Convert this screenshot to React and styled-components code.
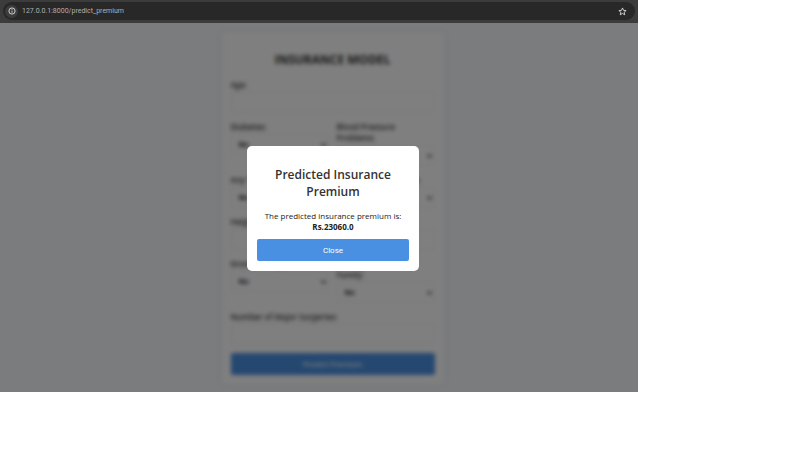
import React, { useState } from 'react'
import styled, { createGlobalStyle } from 'styled-components'

const fonts = {
  body: `'Open Sans', 'Noto Sans', sans-serif`,
  control: `Roboto, 'Liberation Sans', sans-serif`,
}

const colors = {
  page: '#f6f8fb',
  text: '#333',
  blue: '#4a90e2',
  chrome: '#3c3c3c',
  address: '#282828',
}

const GlobalStyle = createGlobalStyle`
  * {
    box-sizing: border-box;
  }
  body {
    margin: 0;
    background: #fff;
    font-family: ${fonts.body};
    color: ${colors.text};
  }
`

const Browser = styled.div`
  width: calc(100% - 168px);
  overflow: hidden;
`

const Toolbar = styled.header`
  padding: 2px 3px 3px;
  background: ${colors.chrome};
`

const AddressBar = styled.div`
  display: flex;
  align-items: center;
  gap: 4px;
  height: 18px;
  padding: 0 8px 0 2px;
  border-radius: 9px;
  background: ${colors.address};
`

const IconButton = styled.button`
  display: flex;
  align-items: center;
  justify-content: center;
  width: ${({ $size }) => $size}px;
  height: ${({ $size }) => $size}px;
  padding: 0;
  border: 0;
  border-radius: 50%;
  background: ${({ $filled }) => ($filled ? '#3c3c3c' : 'transparent')};
  color: #d0d0d0;
`

const Url = styled.input`
  flex: 1;
  min-width: 0;
  padding: 0;
  border: 0;
  outline: 0;
  background: transparent;
  font: 7px/12px ${fonts.control};
  color: #b0b0b0;
`

const Page = styled.main`
  position: relative;
  display: flex;
  justify-content: center;
  padding: 9px 0 8px 27px;
  background: ${colors.page};
`

const Form = styled.form`
  display: flex;
  flex-direction: column;
  gap: 8px;
  width: 222px;
  padding: 19px 9px 9px;
  border-radius: 4px;
  background: #fff;
  box-shadow: 0 0 5px rgba(0, 0, 0, 0.08);
`

const FormTitle = styled.h1`
  margin: 0 0 2px;
  font-size: 12px;
  line-height: 18px;
  font-weight: 700;
  text-align: center;
`

const Row = styled.div`
  display: grid;
  grid-template-columns: 1fr 1fr;
  align-items: start;
  gap: 8px;
`

const Field = styled.div`
  display: flex;
  flex-direction: column;
  gap: 2px;
`

const Label = styled.label`
  font-size: 8px;
  line-height: 11px;
  font-weight: 600;
  color: #444;
`

const Input = styled.input`
  width: 100%;
  height: 21px;
  padding: 0 7px;
  border: 1px solid #eee;
  border-radius: 2px;
  background: #fff;
  font: 8px ${fonts.control};
`

const SelectBox = styled.div`
  display: grid;
  align-items: center;

  select,
  svg {
    grid-area: 1 / 1;
  }
  svg {
    justify-self: end;
    margin-right: 3px;
    pointer-events: none;
  }
`

const Select = styled.select`
  width: 100%;
  height: 21px;
  padding: 0 7px;
  border: 1px solid #eee;
  border-radius: 2px;
  appearance: none;
  background: #fff;
  font: 500 8px ${fonts.control};
  color: #000;
`

const Button = styled.button`
  width: 100%;
  height: 22px;
  padding: 0;
  border: 0;
  border-radius: 2px;
  background: ${colors.blue};
  font: 8px ${fonts.control};
  color: #fff;
  cursor: pointer;
`

const Overlay = styled.div`
  position: absolute;
  inset: 0;
  display: flex;
  align-items: center;
  justify-content: center;
  padding: 2px 0 0 28px;
  background: rgba(0, 0, 0, 0.5);
  backdrop-filter: blur(2px);
`

const Modal = styled.div`
  width: 172px;
  padding: 20px 10px 10px;
  border-radius: 5px;
  background: #fff;
  text-align: center;

  h2 {
    margin: 0 0 10px;
    font-size: 12px;
    line-height: 17px;
    font-weight: 600;
  }
  p {
    margin: 0 0 4px;
    font-size: 8px;
    line-height: 11px;
    color: #222;
  }
  strong {
    display: block;
    font-weight: 700;
  }
`

const SelectField = ({ id, label }) => (
  <Field>
    <Label htmlFor={id}>{label}</Label>
    <SelectBox>
      <Select id={id} defaultValue="No">
        <option>No</option>
        <option>Yes</option>
      </Select>
      <svg width="5" height="4" viewBox="0 0 5 4" fill="none" stroke="#000" strokeWidth="1.2">
        <path d="M.5.8 2.5 2.9 4.5.8" />
      </svg>
    </SelectBox>
  </Field>
)

const TextField = ({ id, label }) => (
  <Field>
    <Label htmlFor={id}>{label}</Label>
    <Input id={id} type="number" />
  </Field>
)

const App = () => {
  const [open, setOpen] = useState(true)

  const handleSubmit = (e) => {
    e.preventDefault()
    setOpen(true)
  }

  return (
    <Browser>
      <GlobalStyle />
      <Toolbar>
        <AddressBar>
          <IconButton type="button" aria-label="Site information" $size={13} $filled>
            <svg width="8" height="8" viewBox="0 0 8 8" fill="none" stroke="currentColor">
              <circle cx="4" cy="4" r="3.1" strokeWidth="1" />
              <path d="M4 3.6V5.7M4 2.2V3" strokeWidth="0.9" />
            </svg>
          </IconButton>
          <Url aria-label="Address" defaultValue="127.0.0.1:8000/predict_premium" />
          <IconButton type="button" aria-label="Bookmark" $size={10}>
            <svg width="9" height="9" viewBox="0 0 24 24" fill="none" stroke="currentColor" strokeWidth="2.6">
              <path d="m12 2.5 2.7 6.4 6.9.6-5.2 4.5 1.6 6.8-6-3.6-6 3.6L7.6 14 2.4 9.5l6.9-.6z" />
            </svg>
          </IconButton>
        </AddressBar>
      </Toolbar>
      <Page>
        <Form onSubmit={handleSubmit}>
          <FormTitle>INSURANCE MODEL</FormTitle>
          <TextField id="age" label="Age:" />
          <Row>
            <SelectField id="diabetes" label="Diabetes:" />
            <SelectField id="pressure" label="Blood Pressure Problems:" />
          </Row>
          <Row>
            <SelectField id="transplants" label="Any Transplants:" />
            <SelectField id="chronic" label="Any Chronic Diseases:" />
          </Row>
          <Row>
            <TextField id="height" label="Height:" />
            <TextField id="weight" label="Weight:" />
          </Row>
          <Row>
            <SelectField id="allergies" label="Known Allergies:" />
            <SelectField id="cancer" label="History of Cancer in Family:" />
          </Row>
          <TextField id="surgeries" label="Number of Major Surgeries:" />
          <Button type="submit">Predict Premium</Button>
        </Form>
        {open && (
          <Overlay>
            <Modal role="dialog" aria-modal="true" aria-labelledby="result-title">
              <h2 id="result-title">Predicted Insurance Premium</h2>
              <p>
                The predicted insurance premium is: <strong>Rs.23060.0</strong>
              </p>
              <Button type="button" onClick={() => setOpen(false)}>
                Close
              </Button>
            </Modal>
          </Overlay>
        )}
      </Page>
    </Browser>
  )
}

export default App
